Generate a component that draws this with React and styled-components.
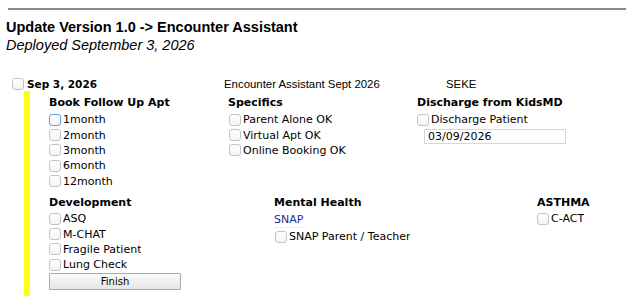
import React from 'react'
import styled, { createGlobalStyle } from 'styled-components'

const GlobalStyle = createGlobalStyle`
  html, body {
    margin: 0;
    padding: 0;
    background: #ffffff;
  }
  body {
    font-family: "DejaVu Sans", Verdana, sans-serif;
    color: #000;
  }
`

const Page = styled.div`
  padding: 8px 6px 0 8px;
`

const Rule = styled.div`
  height: 0;
  border-top: 2px solid #8a8a8a;
`

const Title = styled.h1`
  margin: 8px 0 0 -2px;
  font-family: "Liberation Sans", Arial, sans-serif;
  font-size: 14.5px;
  font-weight: bold;
  line-height: 18px;
`

const Subtitle = styled.div`
  margin-left: -2px;
  font-family: "Liberation Sans", Arial, sans-serif;
  font-size: 14.5px;
  font-style: italic;
  line-height: 18px;
`

const Entry = styled.div`
  margin-top: 23px;
  padding-left: 4px;
`

const EntryHeader = styled.div`
  display: grid;
  grid-template-columns: 212px 222px auto;
  align-items: center;
  height: 14px;
`

const DateCell = styled.label`
  display: flex;
  align-items: center;
  gap: 3px;
  font-size: 10.5px;
  font-weight: bold;
`

const Note = styled.span`
  font-family: "Liberation Sans", Arial, sans-serif;
  font-size: 11.4px;
`

const Body = styled.div`
  margin-left: 12px;
  border-left: 6px solid #ffff1a;
  padding: 4px 0 6px 19px;
`

const Grid = styled.div`
  display: grid;
  grid-template-columns: ${p => p.$cols};
  margin-top: ${p => p.$top || 0}px;
`

const Column = styled.div`
  display: flex;
  flex-direction: column;
  align-items: flex-start;
`

const Heading = styled.div`
  font-size: 11px;
  font-weight: bold;
  line-height: 16px;
  height: ${p => p.$h || 16}px;
`

const Row = styled.label`
  display: flex;
  align-items: center;
  gap: 2px;
  height: 15.4px;
  font-size: 11px;
  line-height: 13px;
  margin-left: ${p => p.$indent || 0}px;
`

const Label = styled.span`
  display: block;
  height: 13px;
  overflow: hidden;
`

const Box = styled.input.attrs({ type: 'checkbox' })`
  appearance: none;
  -webkit-appearance: none;
  margin: 0;
  flex: none;
  width: 12px;
  height: 12px;
  box-sizing: border-box;
  border: ${p => (p.$focus ? '1.5px solid #6d9ee6' : '1px solid #c4c4c4')};
  border-radius: 3px;
  background: linear-gradient(#ffffff, #f4f4f4);
  box-shadow: ${p => (p.$focus ? '0 0 1px #9fc2f2' : 'none')};
`

const DateInput = styled.input`
  margin: 2px 0 0 7px;
  width: 142px;
  height: 15px;
  box-sizing: border-box;
  border: 1px solid #d6d6d6;
  padding: 0 3px;
  font-family: "DejaVu Sans", Verdana, sans-serif;
  font-size: 11px;
  color: #000;
  background: #fff;
  outline: none;
`

const Link = styled.a`
  font-size: 11px;
  line-height: 15px;
  color: #2a2a8a;
  text-decoration: none;
  border-bottom: 1px solid #ececf4;
  margin: 1px 0 1px;
`

const Button = styled.button`
  margin-top: 0;
  width: 132px;
  height: 17px;
  box-sizing: border-box;
  border: 1px solid #a9a9a9;
  border-radius: 1px;
  background: linear-gradient(#fbfbfb, #e6e6e6);
  font-family: "DejaVu Sans", Verdana, sans-serif;
  font-size: 10px;
  color: #000;
  padding: 0;
`

function Check({ label, focus, indent }) {
  return (
    <Row $indent={indent}>
      <Box $focus={focus} />
      <Label>{label}</Label>
    </Row>
  )
}

export default function App() {
  return (
    <>
      <GlobalStyle />
      <Page>
        <Rule />
        <Title>Update Version 1.0 -&gt; Encounter Assistant</Title>
        <Subtitle>Deployed September 3, 2026</Subtitle>

        <Entry>
          <EntryHeader>
            <DateCell>
              <Box />
              Sep 3, 2026
            </DateCell>
            <Note>Encounter Assistant Sept 2026</Note>
            <Note>SEKE</Note>
          </EntryHeader>

          <Body>
            <Grid $cols="179px 189px auto">
              <Column>
                <Heading $h={17}>Book Follow Up Apt</Heading>
                <Check label="1month" focus />
                <Check label="2month" />
                <Check label="3month" />
                <Check label="6month" />
                <Check label="12month" />
              </Column>
              <Column>
                <Heading $h={17}>Specifics</Heading>
                <Check label="Parent Alone OK" indent={1} />
                <Check label="Virtual Apt OK" indent={1} />
                <Check label="Online Booking OK" indent={1} />
              </Column>
              <Column>
                <Heading $h={17}>Discharge from KidsMD</Heading>
                <Check label="Discharge Patient" />
                <DateInput defaultValue="03/09/2026" />
              </Column>
            </Grid>

            <Grid $cols="225px 263px auto" $top={6}>
              <Column>
                <Heading>Development</Heading>
                <Check label="ASQ" />
                <Check label="M-CHAT" />
                <Check label="Fragile Patient" />
                <Check label="Lung Check" />
                <Button>Finish</Button>
              </Column>
              <Column>
                <Heading>Mental Health</Heading>
                <Link href="#">SNAP</Link>
                <Check label="SNAP Parent / Teacher" indent={1} />
              </Column>
              <Column>
                <Heading>ASTHMA</Heading>
                <Check label="C-ACT" />
              </Column>
            </Grid>
          </Body>
        </Entry>
      </Page>
    </>
  )
}
